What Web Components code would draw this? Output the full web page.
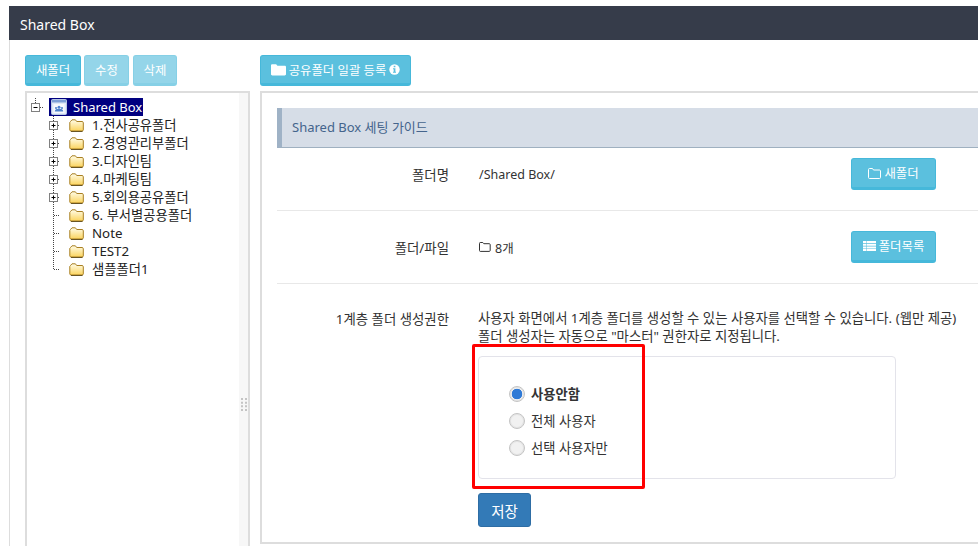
<!DOCTYPE html>
<html lang="ko">
<head>
<meta charset="utf-8">
<title>Shared Box</title>
<style>
  html, body { margin: 0; height: 100%; overflow: hidden; background: #fff; }
  body {
    font-family: "Noto Sans", "Noto Sans CJK KR", sans-serif;
    font-size: 13px;
    color: #333;
  }
</style>
</head>
<body>
<sb-app>
  <sb-tree slot="tree">
    <sb-tree-item root label="Shared Box"></sb-tree-item>
    <sb-tree-item expander label="1.전사공유폴더"></sb-tree-item>
    <sb-tree-item expander label="2.경영관리부폴더"></sb-tree-item>
    <sb-tree-item expander label="3.디자인팀"></sb-tree-item>
    <sb-tree-item expander label="4.마케팅팀"></sb-tree-item>
    <sb-tree-item expander label="5.회의용공유폴더"></sb-tree-item>
    <sb-tree-item label="6. 부서별공용폴더"></sb-tree-item>
    <sb-tree-item label="Note"></sb-tree-item>
    <sb-tree-item label="TEST2"></sb-tree-item>
    <sb-tree-item last label="샘플폴더1"></sb-tree-item>
  </sb-tree>
</sb-app>

<script>
const ICONS = {
  folder: `<svg width="15" height="13" viewBox="0 0 14 12"><path fill="#fff" d="M1.2 1h3.6l1.2 1.4h6.8c.6 0 1.2.5 1.2 1.1v6.9c0 .6-.6 1.1-1.2 1.1H1.2C.6 11.5 0 11 0 10.4V2.1C0 1.5.6 1 1.2 1z"/></svg>`,
  folderOpen: `<svg width="13" height="11" viewBox="0 0 13 11"><path fill="none" stroke="#fff" d="M1.5.5h3l1 1.5h6c.6 0 1 .4 1 1v6.5c0 .6-.4 1-1 1h-10c-.6 0-1-.4-1-1v-8c0-.6.4-1 1-1z"/></svg>`,
  list: `<svg width="13" height="10" viewBox="0 0 13 10"><path fill="#fff" d="M0 0h13v2H0zM0 2.7h13v2H0zM0 5.4h13v2H0zM0 8h13v2H0z"/><path fill="#5bc0de" opacity=".5" d="M3 0h1v10H3z"/></svg>`,
  info: `<svg width="11" height="11" viewBox="0 0 11 11"><circle cx="5.5" cy="5.5" r="5.2" fill="#fff"/><path fill="#5bc0de" d="M4.7 1.8h1.7v1.5H4.7zM4 4.2h2.4v3.6H7v1H4v-1h.7V5.2H4z"/></svg>`,
  treeFolder: `<svg width="15" height="13" viewBox="0 0 15 13"><defs><linearGradient id="f" x1="0" y1="0" x2="0" y2="1"><stop offset="0" stop-color="#fffce8"/><stop offset="1" stop-color="#fbd45e"/></linearGradient></defs><path d="M1.5 2.5 3 .8h3.4l1.3 1.7h5.4c.7 0 1.2.5 1.2 1.2v7.2c0 .6-.5 1.1-1.2 1.1H2c-.7 0-1.2-.5-1.2-1.1V3.3z" fill="url(#f)" stroke="#a87f22"/><path d="M2 12.6h11.5" stroke="#5e4a18"/></svg>`,
  rootBox: `<svg width="16" height="16" viewBox="0 0 16 16"><rect x=".5" y=".5" width="15" height="15" rx="1" fill="#dfe8f6" stroke="#b8c8e4"/><rect x="1" y="1" width="14" height="2.5" fill="#7d9fd6"/><rect x="2.5" y="5" width="11" height="9" fill="#f7f9fd"/><g fill="#4f82cc"><circle cx="8" cy="8.2" r="1.5"/><circle cx="5" cy="9" r="1.1"/><circle cx="11" cy="9" r="1.1"/><path d="M3.8 12.5c0-1.6 1-2.5 2-2.5h4.4c1 0 2 .9 2 2.5z"/></g></svg>`,
  grip: `<svg width="6" height="13" viewBox="0 0 6 13"><g fill="#c4c4c4"><path d="M0 0h2v2H0zM4 0h2v2H4zM0 3.7h2v2H0zM4 3.7h2v2H4zM0 7.3h2v2H0zM4 7.3h2v2H4zM0 11h2v2H0zM4 11h2v2H4z"/></g></svg>`
};

class SbApp extends HTMLElement {
  constructor() {
    super();
    this.attachShadow({ mode: 'open' }).innerHTML = `
      <style>
        :host { display: block; padding: 6px 0 0 9px; position: relative; height: 540px; box-sizing: border-box; }
        .title {
          height: 34px; box-sizing: border-box; background: #363c4a; color: #fff;
          font-size: 14px; line-height: 30px; padding: 4px 0 0 11px;
        }
        .body {
          display: flex; height: 506px; box-sizing: border-box;
          border-left: 1px solid #ddd; padding: 15px 0 0 15px;
        }
        .left { width: 225px; flex: none; }
        .right { flex: 1; min-width: 0; margin-left: 10px; }
        .bar { display: flex; gap: 3px; height: 31px; margin-bottom: 5px; }
        .bar sb-button + sb-button + sb-button { margin-left: 1px; }
        .panel {
          height: 453px; box-sizing: border-box;
          border: 2px solid #ddd; border-right: 0;
          padding: 15px 0 0 15px;
          overflow: hidden;
        }
        .tree-box { height: 470px; box-sizing: border-box; border: 2px solid #ddd; border-bottom: 0; }
        .guide {
          height: 40px; box-sizing: border-box;
          background: #d6dde7; border-left: 5px solid #9fb2c6; border-bottom: 1px solid #9fb0c0;
          color: #44648c; font-size: 13px; line-height: 39px; padding-left: 10px;
        }
        .grip { position: absolute; left: 241px; top: 398px; line-height: 0; }
        .mark {
          position: absolute; left: 472px; top: 344px;
          width: 173px; height: 145px; box-sizing: border-box;
          border: 3px solid #f00; border-radius: 2px;
        }
        .save { margin-top: 14px; }
        .perm-note { line-height: 18px; font-size: 13.35px; margin-top: 25px; white-space: nowrap; }
        .perm-box {
          width: 418px; height: 123px; box-sizing: border-box; margin-top: 11px;
          border: 1px solid #e3e3ea; border-radius: 4px;
          padding: 23px 0 0 30px;
        }
      </style>
      <div class="title">Shared Box</div>
      <div class="body">
        <div class="left">
          <div class="bar">
            <sb-button width="56">새폴더</sb-button>
            <sb-button width="45" disabled>수정</sb-button>
            <sb-button width="44" disabled>삭제</sb-button>
          </div>
          <div class="tree-box"><slot name="tree"></slot></div>
        </div>
        <div class="right">
          <div class="bar">
            <sb-button width="151">${ICONS.folder}공유폴더 일괄 등록${ICONS.info}</sb-button>
          </div>
          <div class="panel">
            <div class="guide">Shared Box 세팅 가이드</div>
            <sb-field-row label="폴더명" height="63" class="first">
              /Shared Box/
              <sb-button slot="action" width="85" height="32">${ICONS.folderOpen}새폴더</sb-button>
            </sb-field-row>
            <sb-field-row label="폴더/파일" height="73">
              <span style="display:inline-flex;align-items:center;gap:4px"><svg width="12" height="10" viewBox="0 0 12 10"><path fill="none" stroke="#333" d="M1.2.5h2.6l1 1.2h5.5c.5 0 .9.4.9.9v5.9c0 .5-.4.9-.9.9H1.2c-.5 0-.7-.4-.7-.9V1.4c0-.5.2-.9.7-.9z"/></svg>8개</span>
              <sb-button slot="action" width="85" height="32">${ICONS.list}폴더목록</sb-button>
            </sb-field-row>
            <sb-field-row label="1계층 폴더 생성권한" top plain>
              <div class="perm-note">사용자 화면에서 1계층 폴더를 생성할 수 있는 사용자를 선택할 수 있습니다. (웹만 제공)<br>폴더 생성자는 자동으로 "마스터" 권한자로 지정됩니다.</div>
              <div class="perm-box">
                <sb-radio checked>사용안함</sb-radio>
                <sb-radio>전체 사용자</sb-radio>
                <sb-radio>선택 사용자만</sb-radio>
              </div>
              <div class="save"><sb-button width="53" height="34" primary>저장</sb-button></div>
            </sb-field-row>
          </div>
        </div>
      </div>
      <div class="grip">${ICONS.grip}</div>
      <div class="mark"></div>
    `;
  }
}

class SbButton extends HTMLElement {
  constructor() {
    super();
    const w = this.getAttribute('width') || 60;
    const h = this.getAttribute('height') || 31;
    this.attachShadow({ mode: 'open' }).innerHTML = `
      <style>
        :host { display: inline-flex; flex: none; width: ${w}px; height: ${h}px; }
        :host([disabled]) { opacity: .65; }
        button {
          all: unset; box-sizing: border-box; width: 100%; height: 100%;
          display: flex; align-items: center; justify-content: center; gap: 3px;
          background: #5bc0de; color: #fff;
          border: 1px solid #46b8da; border-bottom-width: 3px; border-radius: 3px;
          font-family: inherit; font-size: 12.4px; white-space: nowrap;
        }
        :host([primary]) button { background: #337ab7; border: 1px solid #2e6da4; font-size: 14.5px; }
      </style>
      <button><slot></slot></button>
    `;
  }
}

class SbTree extends HTMLElement {
  constructor() {
    super();
    this.attachShadow({ mode: 'open' }).innerHTML = `
      <style>
        :host { display: block; height: 100%; box-sizing: border-box; padding-top: 5px; border-right: 9px solid #f7f7f7; }
      </style>
      <slot></slot>
    `;
  }
}

class SbTreeItem extends HTMLElement {
  constructor() {
    super();
    const root = this.hasAttribute('root');
    const label = this.getAttribute('label');
    const joint = this.renderJoint(root);
    this.attachShadow({ mode: 'open' }).innerHTML = `
      <style>
        :host { display: flex; height: 18px; align-items: center; font-size: 13.3px; color: #222; white-space: nowrap; padding-left: 4px; }
        svg { display: block; flex: none; }
        .label { margin-left: 8px; line-height: 18px; }
        .root {
          display: flex; align-items: center; height: 18px; background: #000080; color: #fff;
          margin-left: 0; padding-right: 1px; font-size: 13px;
        }
        .root .label { margin-left: 6px; }
        .root svg { margin-left: 2px; }
      </style>
      ${joint}
      ${root
        ? `<span class="root">${ICONS.rootBox}<span class="label">${label}</span></span>`
        : `<span style="width:19px;flex:none"></span>${ICONS.treeFolder}<span class="label">${label}</span>`}
    `;
  }

  // dotted guide lines and the +/- box of one row
  renderJoint(root) {
    const dot = 'stroke="#444" stroke-dasharray="1 1"';
    if (root) {
      return `<svg width="18" height="18" viewBox="0 0 18 18">
        <path d="M4.5 0V5" ${dot}/><path d="M9 9.5H12" ${dot}/>
        <rect x=".5" y="5.5" width="8" height="8" fill="#fff" stroke="#808080"/>
        <path d="M2.5 9.5h4" stroke="#000"/>
      </svg>`;
    }
    const last = this.hasAttribute('last');
    const box = this.hasAttribute('expander');
    return `<svg width="36" height="18" viewBox="0 0 36 18" style="margin-right:-17px">
      <path d="M22.5 0V${last ? 9 : 18}" ${dot}/><path d="M23 9.5H28" ${dot}/>
      ${box ? `<rect x="18.5" y="5.5" width="8" height="8" fill="#fff" stroke="#808080"/><path d="M20.5 9.5h4M22.5 7.5v4" stroke="#000"/>` : ''}
    </svg>`;
  }
}

class SbFieldRow extends HTMLElement {
  constructor() {
    super();
    const h = this.getAttribute('height');
    const first = this.classList.contains('first');
    this.attachShadow({ mode: 'open' }).innerHTML = `
      <style>
        :host {
          display: flex; box-sizing: border-box; ${h ? `height: ${h}px;` : ''}
          ${first ? 'padding-bottom: 10px;' : ''}
          align-items: center;
          border-bottom: 1px solid #e8e8e8;
          font-size: 12.5px;
        }
        :host([top]) { align-items: flex-start; }
        :host([plain]) { border-bottom: 0; }
        .label { width: 172px; flex: none; text-align: right; white-space: nowrap; font-size: 13.4px; }
        :host([top]) .label { margin-top: 26px; line-height: 18px; }
        .value { margin-left: 30px; flex: 1; min-width: 0; }
        :host([top]) .value { margin-left: 29px; }
        .action { width: 127px; flex: none; display: flex; }
      </style>
      <div class="label">${this.getAttribute('label')}</div>
      <div class="value"><slot></slot></div>
      <div class="action"><slot name="action"></slot></div>
    `;
  }
}

class SbRadio extends HTMLElement {
  constructor() {
    super();
    this.attachShadow({ mode: 'open' }).innerHTML = `
      <style>
        :host { display: flex; align-items: center; gap: 6px; height: 27px; font-size: 13.3px; }
        :host([checked]) { font-weight: 700; }
        .dot {
          width: 16px; height: 16px; box-sizing: border-box; border-radius: 50%;
          border: 1px solid #c4c4c4; background: #f1f1f1;
          box-shadow: inset 0 0 0 1px #e4e4e4;
        }
        :host([checked]) .dot {
          background: radial-gradient(circle, #2f7ad6 0 5px, #f4f4f4 5.6px);
        }
      </style>
      <span class="dot"></span><slot></slot>
    `;
  }
}

customElements.define('sb-button', SbButton);
customElements.define('sb-radio', SbRadio);
customElements.define('sb-field-row', SbFieldRow);
customElements.define('sb-tree-item', SbTreeItem);
customElements.define('sb-tree', SbTree);
customElements.define('sb-app', SbApp);
</script>
</body>
</html>
